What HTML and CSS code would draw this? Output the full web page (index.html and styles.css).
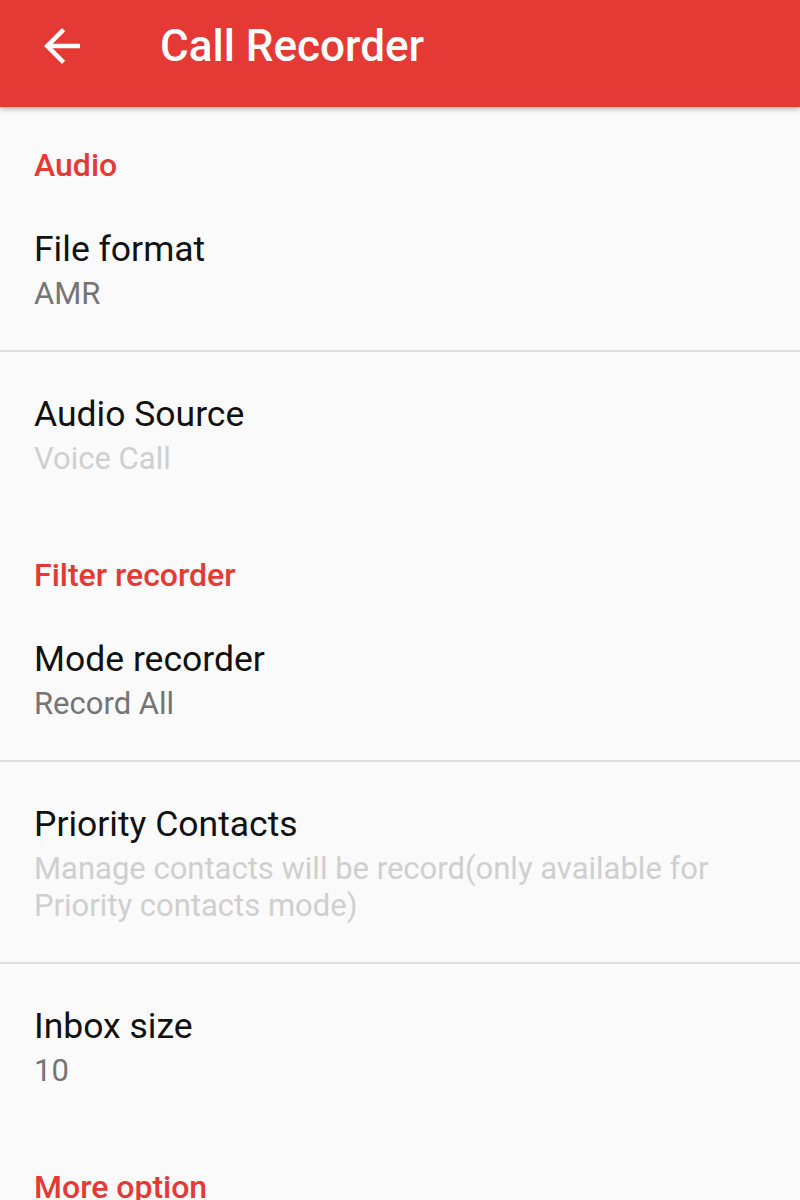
FILE: index.html
```html
<!DOCTYPE html>
<html lang="en">
<head>
  <meta charset="UTF-8">
  <title>Call Recorder</title>
  <link rel="stylesheet" href="styles.css">
</head>
<body>

  <header class="toolbar">
    <button class="back" aria-label="Back">
      <svg viewBox="0 0 24 24" width="54" height="54">
        <path d="M20 11H7.83l5.59-5.59L12 4l-8 8 8 8 1.41-1.41L7.83 13H20v-2z" fill="#fff"/>
      </svg>
    </button>
    <h1 class="toolbar-title">Call Recorder</h1>
  </header>

  <main class="prefs">
    <div class="pref-category">Audio</div>
    <div class="pref with-divider">
      <div class="pref-title">File format</div>
      <div class="pref-summary">AMR</div>
    </div>
    <div class="pref">
      <div class="pref-title">Audio Source</div>
      <div class="pref-summary disabled">Voice Call</div>
    </div>

    <div class="pref-category">Filter recorder</div>
    <div class="pref with-divider">
      <div class="pref-title">Mode recorder</div>
      <div class="pref-summary">Record All</div>
    </div>
    <div class="pref with-divider">
      <div class="pref-title">Priority Contacts</div>
      <div class="pref-summary disabled">Manage contacts will be record(only available for Priority contacts mode)</div>
    </div>
    <div class="pref">
      <div class="pref-title">Inbox size</div>
      <div class="pref-summary">10</div>
    </div>

    <div class="pref-category">More option</div>
  </main>

</body>
</html>
```
FILE: styles.css
```css
body {
  margin: 0;
  background: #fafafa;
  font-family: Roboto, "Noto Sans", sans-serif;
}
.toolbar {
  display: flex;
  align-items: center;
  height: 92px;
  padding-bottom: 15px;
  background: #e53935;
  box-shadow: 0 2px 5px rgba(0,0,0,0.3);
  position: relative;
  z-index: 1;
}
.back {
  display: flex;
  margin: 0 0 0 35px;
  padding: 0;
  background: none;
  border: none;
  cursor: pointer;
}
.toolbar-title {
  margin: 0 0 0 71px;
  font-size: 44px;
  line-height: 52px;
  font-weight: 500;
  color: #fff;
}
.pref-category {
  padding: 39px 34px 3px;
  font-size: 32px;
  line-height: 38px;
  font-weight: 500;
  color: #e53935;
}
.pref {
  padding: 41px 34px 38px;
  border-bottom: 2px solid transparent;
}
.with-divider {
  border-bottom-color: #dedede;
}
.pref-title {
  font-size: 35.5px;
  line-height: 42px;
  color: #111;
}
.pref-summary {
  margin-top: 5px;
  font-size: 31px;
  line-height: 37px;
  color: #757575;
}
.pref-summary.disabled {
  color: #cfcfcf;
}
```
